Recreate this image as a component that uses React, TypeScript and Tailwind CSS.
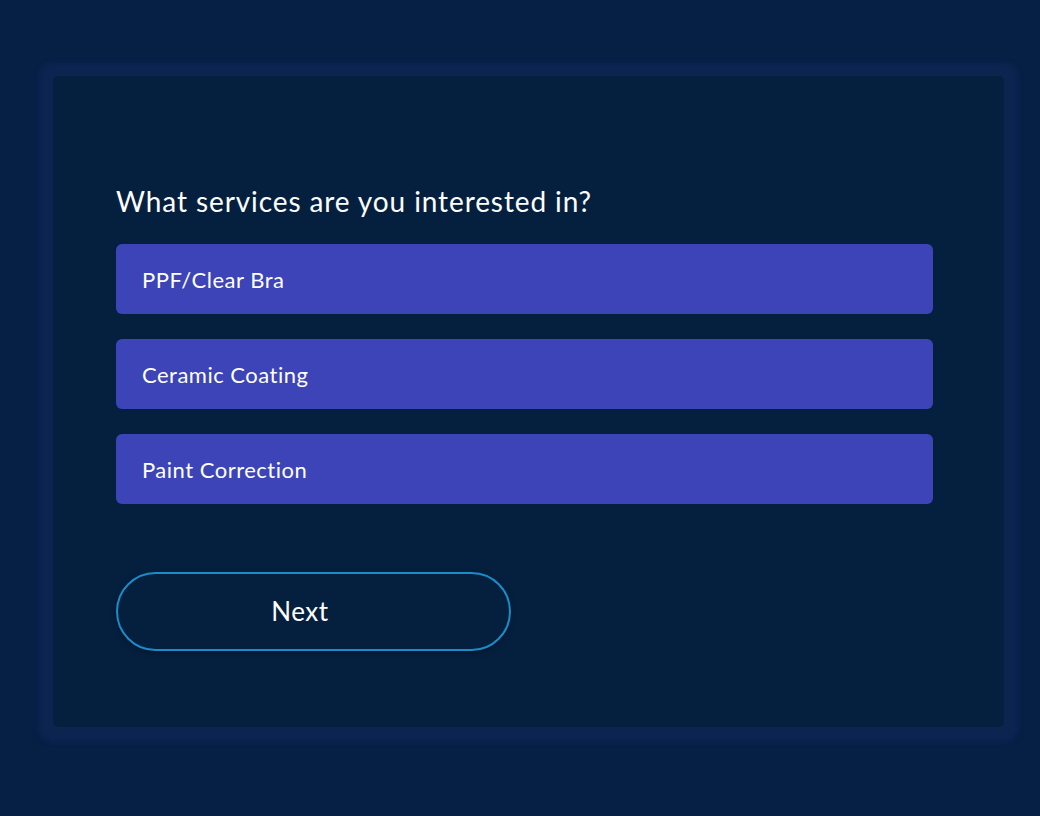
import { useState } from "react";

const services = ["PPF/Clear Bra", "Ceramic Coating", "Paint Correction"];

export default function App() {
  const [selected, setSelected] = useState<string[]>([]);

  const toggle = (s: string) => {
    setSelected((prev) =>
      prev.includes(s) ? prev.filter((x) => x !== s) : [...prev, s]
    );
  };

  return (
    <div
      className="min-h-[816px] w-full bg-[#061f45] pt-[76px] pl-[53px] [font-variant-ligatures:none]"
      style={{ fontFamily: "Lato, 'Noto Sans', sans-serif" }}
    >
      <div className="w-[951px] h-[651px] rounded-[5px] bg-[#05203f] shadow-[0_1px_4px_15px_#0b2450] pt-[184px] pl-[63px] pr-[71px] flex flex-col">
        <div className="-mt-[76px] text-[28px] leading-[34px] text-white tracking-[0.9px]">
          What services are you interested in?
        </div>

        <div className="mt-[26px] flex flex-col gap-[25px]">
          {services.map((s) => (
            <button
              key={s}
              onClick={() => toggle(s)}
              className="h-[70px] w-full rounded-[6px] bg-[#3c44b8] text-left pl-[26px] text-[22px] tracking-[0.5px] text-white"
            >
              {s}
            </button>
          ))}
        </div>

        <button className="mt-[68px] h-[79px] w-[395px] rounded-full border-2 border-[#1a8cc7] pr-[27px] text-[26px] tracking-[0.5px] text-white shadow-[0_2px_6px_rgba(0,0,0,0.35)]">
          Next
        </button>
      </div>
    </div>
  );
}
